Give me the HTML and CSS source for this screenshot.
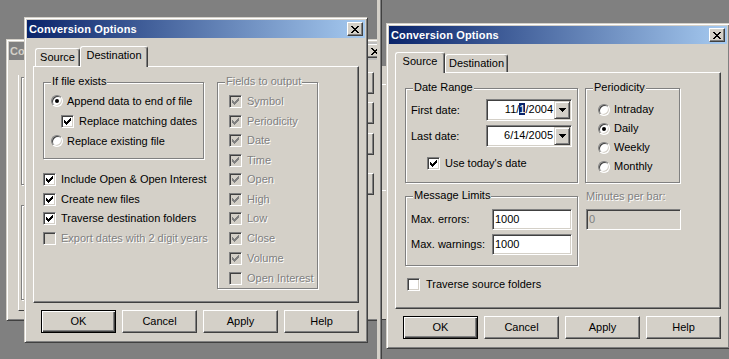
FILE: index.html
```html
<!DOCTYPE html>
<html>
<head>
<meta charset="utf-8">
<title>Conversion Options</title>
<link rel="stylesheet" href="styles.css">
</head>
<body>
<div class="shot shot-left">
  <div class="win back-left">
    <div class="titlebar inactive"><span class="ttl">Co</span><span class="close"><svg width="8" height="7" viewBox="0 0 8 7"><path d="M0 0h2v1h-2zM6 0h2v1h-2zM1 1h2v1h-2zM5 1h2v1h-2zM2 2h4v1h-4zM3 3h2v1h-2zM2 4h4v1h-4zM1 5h2v1h-2zM5 5h2v1h-2zM0 6h2v1h-2zM6 6h2v1h-2z"/></svg></span></div>
    <div class="bk-body">
      <div class="bk-panel">
        <div class="bk-grp bk-a"></div>
        <div class="bk-grp bk-b"></div>
      </div>
      <div class="bk-btns">
        <div class="bk-btn"></div>
        <div class="bk-btn b2"></div>
        <div class="bk-btn b3"></div>
        <div class="bk-btn b4"></div>
      </div>
    </div>
  </div>

  <div class="win front front-left">
    <div class="titlebar"><span class="ttl">Conversion Options</span><span class="close"><svg width="8" height="7" viewBox="0 0 8 7"><path d="M0 0h2v1h-2zM6 0h2v1h-2zM1 1h2v1h-2zM5 1h2v1h-2zM2 2h4v1h-4zM3 3h2v1h-2zM2 4h4v1h-4zM1 5h2v1h-2zM5 5h2v1h-2zM0 6h2v1h-2zM6 6h2v1h-2z"/></svg></span></div>
    <div class="body">
      <div class="tabs">
        <div class="tab t-src"><span class="tt">Source</span></div>
        <div class="tab t-dst sel"><span class="tt">Destination</span></div>
      </div>
      <div class="panel panel-dst">
        <div class="col-l">
          <div class="grp grp-exists">
            <span class="glabel">If file exists</span>
            <div class="row r20"><span class="rb on"></span><span class="lbl">Append data to end of file</span></div>
            <div class="row r20 ind"><span class="cb"><svg width="9" height="9" viewBox="0 0 9 9"><path d="M1 3H2V4H3V5H4V4H5V3H6V2H7V1H8V4H7V5H6V6H5V7H4V8H3V7H2V6H1Z"/></svg></span><span class="lbl">Replace matching dates</span></div>
            <div class="row r20"><span class="rb"></span><span class="lbl">Replace existing file</span></div>
          </div>
          <div class="checks">
            <div class="row r195"><span class="cb"><svg width="9" height="9" viewBox="0 0 9 9"><path d="M1 3H2V4H3V5H4V4H5V3H6V2H7V1H8V4H7V5H6V6H5V7H4V8H3V7H2V6H1Z"/></svg></span><span class="lbl">Include Open &amp; Open Interest</span></div>
            <div class="row r195"><span class="cb"><svg width="9" height="9" viewBox="0 0 9 9"><path d="M1 3H2V4H3V5H4V4H5V3H6V2H7V1H8V4H7V5H6V6H5V7H4V8H3V7H2V6H1Z"/></svg></span><span class="lbl">Create new files</span></div>
            <div class="row r195"><span class="cb"><svg width="9" height="9" viewBox="0 0 9 9"><path d="M1 3H2V4H3V5H4V4H5V3H6V2H7V1H8V4H7V5H6V6H5V7H4V8H3V7H2V6H1Z"/></svg></span><span class="lbl">Traverse destination folders</span></div>
            <div class="row r195"><span class="cb dis"></span><span class="lbl dtext">Export dates with 2 digit years</span></div>
          </div>
        </div>
        <div class="grp grp-fields">
          <span class="glabel dtext">Fields to output</span>
          <div class="row r195"><span class="cb dis"><svg width="9" height="9" viewBox="0 0 9 9"><path d="M1 3H2V4H3V5H4V4H5V3H6V2H7V1H8V4H7V5H6V6H5V7H4V8H3V7H2V6H1Z"/></svg></span><span class="lbl dtext">Symbol</span></div>
          <div class="row r195"><span class="cb dis"><svg width="9" height="9" viewBox="0 0 9 9"><path d="M1 3H2V4H3V5H4V4H5V3H6V2H7V1H8V4H7V5H6V6H5V7H4V8H3V7H2V6H1Z"/></svg></span><span class="lbl dtext">Periodicity</span></div>
          <div class="row r195"><span class="cb dis"><svg width="9" height="9" viewBox="0 0 9 9"><path d="M1 3H2V4H3V5H4V4H5V3H6V2H7V1H8V4H7V5H6V6H5V7H4V8H3V7H2V6H1Z"/></svg></span><span class="lbl dtext">Date</span></div>
          <div class="row r195"><span class="cb dis"><svg width="9" height="9" viewBox="0 0 9 9"><path d="M1 3H2V4H3V5H4V4H5V3H6V2H7V1H8V4H7V5H6V6H5V7H4V8H3V7H2V6H1Z"/></svg></span><span class="lbl dtext">Time</span></div>
          <div class="row r195"><span class="cb dis"><svg width="9" height="9" viewBox="0 0 9 9"><path d="M1 3H2V4H3V5H4V4H5V3H6V2H7V1H8V4H7V5H6V6H5V7H4V8H3V7H2V6H1Z"/></svg></span><span class="lbl dtext">Open</span></div>
          <div class="row r195"><span class="cb dis"><svg width="9" height="9" viewBox="0 0 9 9"><path d="M1 3H2V4H3V5H4V4H5V3H6V2H7V1H8V4H7V5H6V6H5V7H4V8H3V7H2V6H1Z"/></svg></span><span class="lbl dtext">High</span></div>
          <div class="row r195"><span class="cb dis"><svg width="9" height="9" viewBox="0 0 9 9"><path d="M1 3H2V4H3V5H4V4H5V3H6V2H7V1H8V4H7V5H6V6H5V7H4V8H3V7H2V6H1Z"/></svg></span><span class="lbl dtext">Low</span></div>
          <div class="row r195"><span class="cb dis"><svg width="9" height="9" viewBox="0 0 9 9"><path d="M1 3H2V4H3V5H4V4H5V3H6V2H7V1H8V4H7V5H6V6H5V7H4V8H3V7H2V6H1Z"/></svg></span><span class="lbl dtext">Close</span></div>
          <div class="row r195 vol"><span class="cb dis"><svg width="9" height="9" viewBox="0 0 9 9"><path d="M1 3H2V4H3V5H4V4H5V3H6V2H7V1H8V4H7V5H6V6H5V7H4V8H3V7H2V6H1Z"/></svg></span><span class="lbl dtext">Volume</span></div>
          <div class="row r195"><span class="cb dis"></span><span class="lbl dtext">Open Interest</span></div>
        </div>
      </div>
      <div class="btns">
        <div class="btn def">OK</div>
        <div class="btn">Cancel</div>
        <div class="btn">Apply</div>
        <div class="btn">Help</div>
      </div>
    </div>
  </div>
</div>

<div class="sep"></div>

<div class="shot shot-right">
  <div class="back-right">
    <div class="br-line l1"></div>
    <div class="br-line l2"></div>
  </div>
  <div class="win front front-right">
    <div class="titlebar"><span class="ttl">Conversion Options</span><span class="close"><svg width="8" height="7" viewBox="0 0 8 7"><path d="M0 0h2v1h-2zM6 0h2v1h-2zM1 1h2v1h-2zM5 1h2v1h-2zM2 2h4v1h-4zM3 3h2v1h-2zM2 4h4v1h-4zM1 5h2v1h-2zM5 5h2v1h-2zM0 6h2v1h-2zM6 6h2v1h-2z"/></svg></span></div>
    <div class="body">
      <div class="tabs">
        <div class="tab t-src sel"><span class="tt">Source</span></div>
        <div class="tab t-dst"><span class="tt">Destination</span></div>
      </div>
      <div class="panel panel-src">
        <div class="src-top">
          <div class="grp grp-date">
            <span class="glabel">Date Range</span>
            <div class="frow">
              <span class="flabel">First date:</span>
              <div class="combo"><span class="val">11/<span class="hl">1</span>/2004</span><span class="dd"><svg width="7" height="4" viewBox="0 0 7 4"><path d="M0 0h7v1h-1v1h-1v1h-1v1h-1v-1h-1v-1h-1v-1h-1z"/></svg></span></div>
            </div>
            <div class="frow">
              <span class="flabel">Last date:</span>
              <div class="combo"><span class="val">6/14/2005</span><span class="dd"><svg width="7" height="4" viewBox="0 0 7 4"><path d="M0 0h7v1h-1v1h-1v1h-1v1h-1v-1h-1v-1h-1v-1h-1z"/></svg></span></div>
            </div>
            <div class="row r20 today"><span class="cb"><svg width="9" height="9" viewBox="0 0 9 9"><path d="M1 3H2V4H3V5H4V4H5V3H6V2H7V1H8V4H7V5H6V6H5V7H4V8H3V7H2V6H1Z"/></svg></span><span class="lbl">Use today's date</span></div>
          </div>
          <div class="grp grp-per">
            <span class="glabel">Periodicity</span>
            <div class="row r19"><span class="rb"></span><span class="lbl">Intraday</span></div>
            <div class="row r19"><span class="rb on"></span><span class="lbl">Daily</span></div>
            <div class="row r19"><span class="rb"></span><span class="lbl">Weekly</span></div>
            <div class="row r19"><span class="rb"></span><span class="lbl">Monthly</span></div>
          </div>
        </div>
        <div class="src-mid">
          <div class="grp grp-msg">
            <span class="glabel">Message Limits</span>
            <div class="frow f21">
              <span class="flabel w81">Max. errors:</span>
              <div class="inp">1000</div>
            </div>
            <div class="frow f21">
              <span class="flabel w81">Max. warnings:</span>
              <div class="inp">1000</div>
            </div>
          </div>
          <div class="minutes">
            <span class="dtext">Minutes per bar:</span>
            <div class="inp dis">0</div>
          </div>
        </div>
        <div class="row r20 trav"><span class="cb"></span><span class="lbl">Traverse source folders</span></div>
      </div>
      <div class="btns">
        <div class="btn def">OK</div>
        <div class="btn">Cancel</div>
        <div class="btn">Apply</div>
        <div class="btn">Help</div>
      </div>
    </div>
  </div>
</div>
</body>
</html>
```

FILE: styles.css
```css
* { box-sizing: border-box; }
html, body { margin: 0; padding: 0; }
body {
  width: 729px;
  height: 359px;
  overflow: hidden;
  display: flex;
  background: #808080;
  font: 11px/13px "Liberation Sans", Arial, sans-serif;
  color: #000;
}

.shot { position: relative; overflow: hidden; height: 359px; background: #808080; flex: none; }
.shot-left { width: 377px; }
.shot-right { width: 347px; }
.sep {
  width: 5px;
  flex: none;
  background: linear-gradient(to right, #d4d0c8 0 3px, #808080 3px 4px, #404040 4px 5px);
}

/* windows */
.win {
  position: absolute;
  background: #d4d0c8;
  border: 1px solid;
  border-color: #d4d0c8 #404040 #404040 #d4d0c8;
  box-shadow: inset 1px 1px #fff, inset -1px -1px #808080;
  padding: 2px;
}
.front { width: 344px; height: 326px; }
.front-left { left: 24px; top: 17px; }
.front-right { left: 4px; top: 23px; }
.back-left { left: 6px; top: 39px; width: 382px; height: 282px; }

.titlebar {
  height: 18px;
  display: flex;
  align-items: center;
  justify-content: space-between;
  padding: 0 2px;
  background: linear-gradient(to right, #0a246a, #a6caf0);
  color: #fff;
  font-weight: bold;
  letter-spacing: 0.15px;
}
.titlebar.inactive { background: linear-gradient(to right, #808080, #c0c0c0); color: #d4d0c8; padding-left: 1px; }
.ttl { white-space: nowrap; }
.close {
  width: 16px;
  height: 14px;
  flex: none;
  display: flex;
  align-items: center;
  justify-content: center;
  background: #d4d0c8;
  border: 1px solid;
  border-color: #fff #404040 #404040 #fff;
  box-shadow: inset -1px -1px #808080;
  padding-right: 1px;
}
.close svg { display: block; fill: #000; shape-rendering: crispEdges; }

.body { padding: 8px 6px 0; }

/* tabs */
.tabs {
  display: flex;
  align-items: flex-end;
  height: 20px;
  position: relative;
  z-index: 1;
}
.tab {
  height: 18px;
  flex: none;
  display: flex;
  justify-content: center;
  align-items: flex-start;
  border: 1px solid;
  border-bottom: none;
  border-color: #fff #404040 #404040 #fff;
  border-radius: 3px 3px 0 0;
  box-shadow: inset -1px 0 #808080;
  padding-top: 2px;
  background: #d4d0c8;
  white-space: nowrap;
}
.tab.sel { height: 21px; margin-bottom: -1px; }
.t-src { width: 45px; margin-left: 2px; }
.t-src.sel { width: 50px; margin-left: 0; }
.t-dst { width: 63px; }
.t-dst.sel { width: 68px; }

.panel {
  height: 237px;
  border: 1px solid;
  border-color: #fff #404040 #404040 #fff;
  box-shadow: inset -1px -1px #808080;
}

/* buttons */
.btns { display: flex; justify-content: flex-end; gap: 6px; margin-top: 7px; }
.btn {
  width: 75px;
  height: 23px;
  display: flex;
  align-items: center;
  justify-content: center;
  border: 1px solid;
  border-color: #fff #404040 #404040 #fff;
  box-shadow: inset -1px -1px #808080;
  padding-bottom: 1px;
}
.btn.def {
  border-color: #000;
  box-shadow: inset 1px 1px #fff, inset -1px -1px #404040, inset -2px -2px #808080;
}

/* group boxes */
.grp {
  position: relative;
  flex: none;
  border: 1px solid #808080;
  box-shadow: 1px 1px 0 #fff, inset 1px 1px 0 #fff;
}
.glabel {
  position: absolute;
  top: -8px;
  left: 7px;
  padding: 0 1px;
  background: #d4d0c8;
  white-space: nowrap;
}

.row { display: flex; align-items: center; white-space: nowrap; }
.r20 { height: 20px; }
.r19 { height: 19px; }
.r195 { height: 19.5px; }
.rb + .lbl { margin-left: 4px; }
.cb + .lbl { margin-left: 5px; }

.dtext { color: #808080; text-shadow: 1px 1px 0 #fff; }

/* checkbox */
.cb {
  width: 13px;
  height: 13px;
  flex: none;
  padding: 1px;
  background: #fff;
  border: 1px solid;
  border-color: #808080 #fff #fff #808080;
  box-shadow: inset 1px 1px #404040, inset -1px -1px #d4d0c8;
}
.cb svg { display: block; fill: #000; shape-rendering: crispEdges; }
.cb.dis { background: #d4d0c8; }
.cb.dis svg { fill: #808080; }

/* radio */
.rb {
  width: 12px;
  height: 12px;
  flex: none;
  border-radius: 50%;
  background: #fff;
  border: 1px solid;
  border-color: #808080 #fff #fff #808080;
  box-shadow: inset 1px 1px #404040, inset -1px -1px #d4d0c8;
  display: flex;
  align-items: center;
  justify-content: center;
}
.rb.on::after { content: ""; width: 4px; height: 4px; border-radius: 50%; background: #000; }

/* destination panel */
.panel-dst { display: flex; gap: 12px; padding: 15px 0 0 9px; }
.col-l { width: 162px; flex: none; }
.grp-exists { width: 161px; height: 77px; padding: 8px 0 0 7px; }
.grp-exists .ind { padding-left: 10px; }
.checks { margin-top: 11px; }
.grp-fields { width: 101px; height: 207px; padding: 9px 0 0 11px; }
.grp-fields .vol { margin-top: 1px; }

/* source panel */
.panel-src { padding: 15px 0 0 9px; }
.src-top { display: flex; gap: 7px; }
.grp-date { width: 173px; height: 95px; padding: 10px 0 0 5px; }
.grp-per { width: 95px; height: 95px; padding: 11px 0 0 12px; }
.frow { display: flex; align-items: center; height: 22px; white-space: nowrap; }
.frow + .frow { margin-top: 4px; }
.frow.f21 { height: 21px; }
.flabel { width: 75px; flex: none; }
.flabel.w81 { width: 81px; }
.today { margin-top: 6px; padding-left: 16px; }

.combo {
  width: 86px;
  height: 22px;
  display: flex;
  background: #fff;
  border: 1px solid;
  border-color: #808080 #fff #fff #808080;
  box-shadow: inset 1px 1px #404040, inset -1px -1px #d4d0c8;
  padding: 1px;
}
.combo .val { flex: 1; text-align: right; padding-right: 1px; line-height: 17px; }
.hl { background: #0a246a; color: #fff; }
.dd {
  width: 16px;
  height: 18px;
  flex: none;
  display: flex;
  align-items: center;
  justify-content: center;
  background: #d4d0c8;
  border: 1px solid;
  border-color: #d4d0c8 #404040 #404040 #d4d0c8;
  box-shadow: inset 1px 1px #fff, inset -1px -1px #808080;
}
.dd svg { display: block; fill: #000; shape-rendering: crispEdges; }

.src-mid { display: flex; margin-top: 13px; }
.grp-msg { width: 173px; height: 70px; padding: 12px 0 0 5px; }
.inp {
  width: 80px;
  height: 21px;
  background: #fff;
  border: 1px solid;
  border-color: #808080 #fff #fff #808080;
  box-shadow: inset 1px 1px #404040, inset -1px -1px #d4d0c8;
  padding-left: 2px;
  line-height: 18px;
}
.minutes { margin-left: 8px; margin-top: -6px; display: flex; flex-direction: column; white-space: nowrap; }
.minutes .inp { width: 95px; margin-top: 6px; }
.inp.dis { background: #d4d0c8; color: #808080; }
.trav { margin-top: 8px; padding-left: 2px; }
.trav .cb + .lbl { margin-left: 6px; }

/* background window, left shot */
.bk-body { display: flex; align-items: flex-start; padding: 12px 0 0 9px; }
.bk-panel {
  width: 320px;
  height: 236px;
  margin-top: 3px;
  flex: none;
  border-left: 1px solid #fff;
  border-bottom: 1px solid #404040;
  padding: 2px 0 0 2px;
}
.bk-grp { width: 200px; border: 1px solid #808080; box-shadow: 1px 1px 0 #fff, inset 1px 1px 0 #fff; }
.bk-a { height: 108px; }
.bk-b { height: 95px; margin-top: 20px; }
.bk-btns { margin-left: 3px; width: 33px; display: flex; flex-direction: column; }
.bk-btn {
  height: 22px;
  border: 1px solid;
  border-color: #fff #404040 #404040 #fff;
  box-shadow: inset -1px -1px #808080;
}
.bk-btn.b2 { margin-top: 8px; }
.bk-btn.b3 { margin-top: 9px; }
.bk-btn.b4 { margin-top: 18px; }

/* background window, right shot */
.back-right {
  position: absolute;
  left: -40px;
  top: 66px;
  width: 45px;
  height: 254px;
  background: #d4d0c8;
  border-bottom: 1px solid #404040;
  padding-top: 18px;
}
.br-line { height: 1px; background: #fff; }
.br-line.l2 { margin-top: 105px; }
```
